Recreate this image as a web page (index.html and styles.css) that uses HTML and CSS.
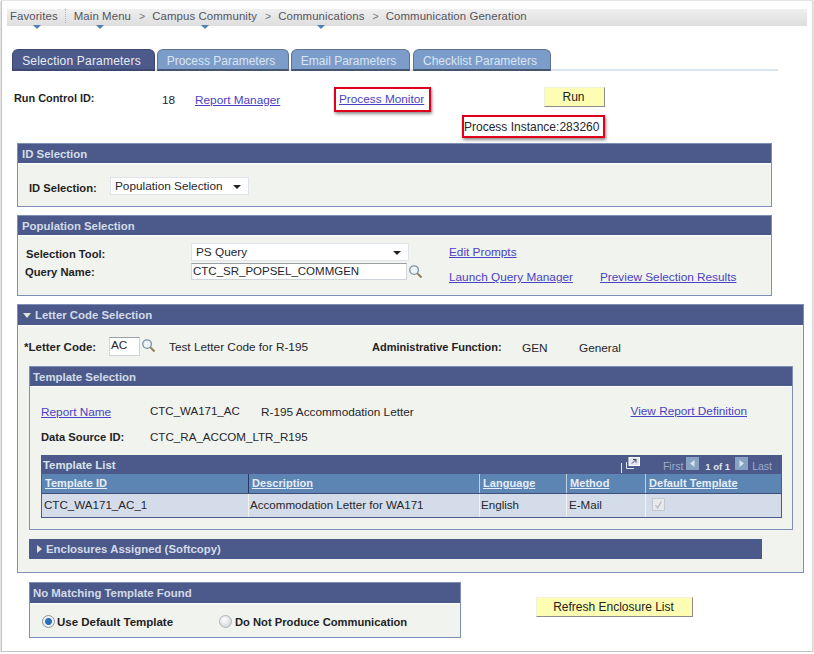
FILE: index.html
```html
<!DOCTYPE html>
<html lang="en">
<head>
<meta charset="utf-8">
<title>Communication Generation</title>
<link rel="stylesheet" href="styles.css">
</head>
<body>
<div class="frame">
  <nav class="crumbs">
    <span class="crumb fav">Favorites<i class="caret"></i></span>
    <span class="crumb menu">Main Menu<i class="caret"></i></span>
    <span class="sep">&gt;</span>
    <span class="crumb">Campus Community<i class="caret"></i></span>
    <span class="sep">&gt;</span>
    <span class="crumb">Communications<i class="caret"></i></span>
    <span class="sep">&gt;</span>
    <span class="crumb">Communication Generation</span>
  </nav>

  <div class="tabs">
    <span class="tab active t1">Selection Parameters</span>
    <span class="tab t2">Process Parameters</span>
    <span class="tab t3">Email Parameters</span>
    <span class="tab t4">Checklist Parameters</span>
  </div>

  <div class="run-row">
    <b class="lbl rc-label">Run Control ID:</b>
    <span class="rc-val">18</span>
    <a class="link rc-link" href="#">Report Manager</a>
    <span class="callout pm"><a class="link" href="#">Process Monitor</a></span>
    <button class="btn run">Run</button>
  </div>
  <div class="instance-row"><span class="callout pi">Process Instance:283260</span></div>

  <section class="panel id-panel">
    <h2 class="bar">ID Selection</h2>
    <div class="id-body">
      <b class="lbl">ID Selection:</b>
      <span class="select sel-id">Population Selection<i class="drop"></i></span>
    </div>
  </section>

  <section class="panel pop-panel">
    <h2 class="bar">Population Selection</h2>
    <div class="pop-body">
      <div class="pop-row1">
        <b class="lbl l-tool">Selection Tool:</b>
        <span class="select sel-tool">PS Query<i class="drop"></i></span>
        <a class="link ep" href="#">Edit Prompts</a>
      </div>
      <div class="pop-row2">
        <b class="lbl l-query">Query Name:</b>
        <span class="input in-query">CTC_SR_POPSEL_COMMGEN</span>
        <svg class="lens" viewBox="0 0 16 16"><circle cx="6.5" cy="6.5" r="4.6" fill="#eef4f8" stroke="#7b93a6" stroke-width="1.4"/><path d="M10 10l4.4 4.4" stroke="#8a7d4e" stroke-width="2"/></svg>
        <a class="link lq" href="#">Launch Query Manager</a>
        <a class="link pv" href="#">Preview Selection Results</a>
      </div>
    </div>
  </section>

  <section class="panel letter-panel">
    <h2 class="bar bar-lc"><i class="tri-down"></i>Letter Code Selection</h2>
    <div class="lc-row">
      <b class="lbl l-code">*Letter Code:</b>
      <span class="input in-ac">AC</span>
      <svg class="lens" viewBox="0 0 16 16"><circle cx="6.5" cy="6.5" r="4.6" fill="#eef4f8" stroke="#7b93a6" stroke-width="1.4"/><path d="M10 10l4.4 4.4" stroke="#8a7d4e" stroke-width="2"/></svg>
      <span class="lc-desc">Test Letter Code for R-195</span>
      <b class="lbl l-admin">Administrative Function:</b>
      <span class="gen">GEN</span>
      <span class="genname">General</span>
    </div>

    <section class="panel tpl-panel">
      <h2 class="bar bar-tpl">Template Selection</h2>
      <div class="tpl-row r1">
        <a class="link tl" href="#">Report Name</a>
        <span class="tv">CTC_WA171_AC</span>
        <span class="tn">R-195 Accommodation Letter</span>
        <a class="link vr" href="#">View Report Definition</a>
      </div>
      <div class="tpl-row r2">
        <b class="lbl tl">Data Source ID:</b>
        <span class="tv">CTC_RA_ACCOM_LTR_R195</span>
      </div>

      <div class="grid">
        <div class="grid-title">
          <b>Template List</b>
          <span class="pager">
            <span class="pipe"></span>
            <svg class="popout" viewBox="0 0 14 12"><rect x="3" y="0.5" width="10.5" height="8" fill="#dfe6f0" stroke="#fff"/><path d="M6 6.5l4-4M7 2.5h3v3" stroke="#39456e" fill="none"/><path d="M0.5 5v6.5H8" stroke="#dfe6f0" fill="none"/></svg>
            <span class="pg first">First</span>
            <svg class="arrow" viewBox="0 0 13 13"><rect width="13" height="13" fill="#86a3c4"/><path d="M8.5 3v7L4 6.5z" fill="#d9e4ef"/></svg>
            <b class="of">1 of 1</b>
            <svg class="arrow" viewBox="0 0 13 13"><rect width="13" height="13" fill="#86a3c4"/><path d="M4.5 3v7L9 6.5z" fill="#d9e4ef"/></svg>
            <span class="pg last">Last</span>
          </span>
        </div>
        <div class="cols head">
          <a class="hc" href="#">Template ID</a>
          <a class="hc" href="#">Description</a>
          <a class="hc" href="#">Language</a>
          <a class="hc" href="#">Method</a>
          <a class="hc" href="#">Default Template</a>
        </div>
        <div class="cols row">
          <span class="dc">CTC_WA171_AC_1</span>
          <span class="dc dc-tight">Accommodation Letter for WA171</span>
          <span class="dc dc-tight">English</span>
          <span class="dc">E-Mail</span>
          <span class="dc"><svg class="check" viewBox="0 0 13 13"><rect x="0.5" y="0.5" width="12" height="12" fill="#e6e8ec" stroke="#c4c8cf"/><path d="M3.5 7l2.2 3 3.6-6.5" stroke="#b4b8be" stroke-width="1.2" fill="none"/></svg></span>
        </div>
      </div>
    </section>

    <h2 class="bar bar-enc"><i class="tri-right"></i>Enclosures Assigned (Softcopy)</h2>
  </section>

  <div class="bottom">
    <section class="panel nm-panel">
      <h2 class="bar bar-tpl">No Matching Template Found</h2>
      <div class="nm-body">
        <span class="radio on"></span><b class="lbl r-a">Use Default Template</b>
        <span class="radio"></span><b class="lbl r-b">Do Not Produce Communication</b>
      </div>
    </section>
    <button class="btn refresh">Refresh Enclosure List</button>
  </div>
</div>
</body>
</html>
```
FILE: styles.css
```css
* { box-sizing: border-box; }
html, body { margin: 0; background: #fff; }
body { font-family: "Liberation Sans", Arial, sans-serif; font-size: 11.8px; color: #26262c; }
.frame {
  width: 812px; height: 652px; margin-left: 1px; padding: 8px 5px 0 5px;
  border: 1px solid #c4c4c4; border-top-color: #e4e4e4; border-right-color: #d8d8d8;
  box-shadow: 0 1px 2px rgba(0,0,0,.35);
}
.crumbs {
  height: 17px; width: 800px; display: flex; align-items: center; padding-left: 3px;
  background: linear-gradient(#efefef, #dedede); color: #55555e; font-size: 11.4px; letter-spacing: .1px;
}
.crumb { position: relative; line-height: 14px; margin-top: -3px; }
.fav { padding-right: 7px; margin-right: 8px; border-right: 1px dotted #b5b5b5; }
.sep { margin: -3px 7px 0 8px; color: #777; font-size: 10.5px; }
.caret {
  position: absolute; left: 50%; bottom: -6px; margin-left: -4px;
  border: 4px solid transparent; border-top-color: #4d7fb8; border-bottom: 0;
}
.menu .caret { left: 46%; }
.tabs {
  display: flex; margin: 23px 0 0 5px; height: 22px; width: 766px; gap: 2px;
  background: linear-gradient(transparent 20px, #dbe5f2 20px);
}
.tab {
  height: 22px; padding: 4px 4px 0 0; text-align: center; border-radius: 6px 6px 0 0; font-size: 12px;
  background: #7c9dc9; color: #d9e5f2; border: 1px solid #5f7391; border-bottom: 2px solid #46556f;
}
.tab.active { background: #4b5a8a; color: #e8ecf5; border-color: #3c486f; letter-spacing: .2px; }
.t1 { width: 143px; }
.t2 { width: 132px; }
.t3 { width: 119px; }
.t4 { width: 138px; margin-left: 1px; }
.link { color: #4a42c4; text-decoration: underline; }
.lbl { color: #1f1f25; font-size: 11.2px; }
.run-row { display: flex; align-items: flex-start; margin: 16px 0 0 7px; height: 26px; position: relative; }
.rc-label { width: 148px; padding-top: 5px; font-size: 10.9px; }
.rc-val { width: 33px; padding-top: 6px; }
.rc-link { width: 139px; padding-top: 6px; }
.callout {
  display: block; border: 2px solid #e0001b; box-shadow: 1px 2px 3px rgba(0,0,0,.45); background: #fff;
}
.pm { width: 97px; height: 25px; padding: 3px 0 0 3px; }
.btn {
  font: 12px "Liberation Sans", Arial, sans-serif; color: #222; background: #fdfdb4; padding: 0 2px 0 0;
  border: 1px solid; border-color: #f1f1d6 #8c8c8c #8c8c8c #f1f1d6; border-radius: 0;
}
.run { width: 61px; height: 20px; margin-left: 113px; }
.instance-row { display: flex; justify-content: flex-end; width: 598px; margin-top: 2px; height: 23px; }
.pi { width: 143px; height: 23px; padding: 3px 0 0 0; font-size: 12px; }
.panel { border: 1px solid #7f90b8; background: #f1f3ee; }
.bar {
  margin: 0; height: 20px; padding: 4px 0 0 4px; font-size: 11.4px; font-weight: bold; background: #4b5a8a; color: #d4dbe8;
  border-bottom: 1px solid #fff;
}
.bar-tpl { padding-left: 3px; }
.id-panel { width: 755px; height: 64px; margin: 5px 0 0 10px; }
.id-body { display: flex; align-items: center; padding: 13px 0 0 11px; }
.id-body .lbl { width: 81px; padding-top: 3px; }
.select {
  display: block; position: relative; height: 18px; background: #fff; border: 1px solid #dfe3e8; padding: 1px 0 0 4px;
}
.drop {
  position: absolute; right: 7px; top: 7px;
  border: 4px solid transparent; border-top-color: #222; border-bottom: 0;
}
.sel-id { width: 139px; }
.pop-panel { width: 755px; height: 81px; margin: 8px 0 0 10px; }
.pop-body { padding: 7px 0 0 8px; }
.pop-row1, .pop-row2 { display: flex; align-items: flex-start; }
.l-tool { width: 165px; padding-top: 5px; }
.sel-tool { width: 218px; margin-right: 40px; }
.ep { margin-top: 2px; }
.pop-row2 { margin-top: 2px; }
.l-query { width: 165px; padding-top: 3px; margin-left: -1px; }
.input { display: block; background: #fff; border: 1px solid #cfd4da; border-top-color: #9aa0a8; }
.in-query { width: 216px; height: 17px; padding: 1px 0 0 1px; margin-left: 1px; font-size: 11.5px; }
.lens { width: 15px; height: 15px; display: block; }
.pop-row2 .lens { margin: 1px 26px 0 1px; }
.lq { width: 151px; margin-top: 7px; }
.pv { margin-top: 7px; }
.letter-panel { width: 787px; height: 269px; margin: 8px 0 0 10px; position: relative; }
.bar-lc { height: 21px; padding-left: 4px; display: flex; align-items: flex-start; }
.tri-down {
  width: 0; height: 0; margin: 4px 4px 0 1px;
  border: 4px solid transparent; border-top: 5px solid #dfe4d8; border-bottom: 0;
}
.lc-row { display: flex; align-items: flex-start; height: 40px; padding: 11px 0 0 6px; }
.l-code { width: 85px; padding-top: 4px; font-size: 11.5px; }
.in-ac { width: 31px; height: 19px; padding-left: 1px; }
.lc-row .lens { margin: 1px 13px 0 1px; }
.lc-desc { width: 203px; padding-top: 3px; }
.l-admin { width: 150px; padding-top: 4px; font-size: 11px; }
.gen { width: 57px; padding-top: 4px; }
.genname { padding-top: 4px; }
.tpl-panel { width: 764px; height: 164px; margin-left: 11px; }
.tpl-row { display: flex; margin-left: 11px; }
.r1 { padding-top: 17px; height: 33px; }
.r2 { padding-top: 10px; height: 25px; }
.tl { width: 109px; }
.tv { width: 111px; font-size: 11.5px; }
.r2 .tv { width: auto; font-size: 11.6px; }
.r2 .tl { padding-top: 1px; }
.tn { width: 369.5px; }
.r1 .tl { padding-top: 1px; }
.r1 .tv, .r1 .tn { margin-top: 1px; }
.grid { width: 741px; margin: 10px 0 0 11px; border: 1px solid #4b5a8a; border-top: 0; }
.grid-title {
  height: 19px; margin: 0 -1px; background: #4b5a8a; color: #dce2ec; padding: 4px 0 0 2px; font-size: 11.4px;
  display: flex; justify-content: space-between; position: relative;
}
.pager { display: flex; align-items: flex-start; color: #9eacc8; font-size: 10.5px; margin: -4px 10px 0 0; padding-top: 2px; }
.pipe { width: 1px; height: 10px; background: #dfe6f0; margin: 6px 4px 0 0; }
.popout { width: 14px; height: 12px; margin-right: 23px; }
.first { margin-right: 3px; }
.pg { margin-top: 3px; }
.last { margin-left: 4px; }
.arrow { width: 13px; height: 13px; }
.of { color: #dfe6f0; font-size: 9.5px; margin: 4px 5px 0 6px; }
.cols { display: grid; grid-template-columns: 207px 231px 87px 79px 1fr; }
.head { height: 20px; background: #5c85b4; border-bottom: 1px solid #3f4d78; }
.hc { color: #e6eef7; font-weight: bold; font-size: 11px; letter-spacing: .05px; padding: 3px 0 0 3px; border-right: 1px solid #c2cfe0; height: 19px; }
.head .hc:nth-child(1) { border-right-color: #28385e; }
.hc:last-child { border-right: 0; }
.row { height: 23px; background: #d5dce9; }
.dc { padding: 4px 0 0 2px; border-right: 1px solid #f1f3ee; font-size: 11.6px; }
.dc-tight { padding-left: 1px; }
.dc:last-child { border-right: 0; padding: 4px 0 0 6px; }
.check { width: 13px; height: 13px; display: block; }
.bar-enc {
  width: 733px; height: 20px; margin: 9px 0 0 11px; padding: 4px 0 0 8px; display: flex; align-items: flex-start; border-bottom: 0;
}
.tri-right {
  width: 0; height: 0; margin: 2px 4px 0 0;
  border: 4px solid transparent; border-left: 5px solid #e3dfcf; border-right: 0;
}
.bottom { display: flex; align-items: flex-start; margin: 9px 0 0 22px; }
.nm-panel { width: 432px; height: 56px; }
.nm-panel .bar { height: 21px; }
.nm-body { display: flex; align-items: center; padding: 11px 0 0 12px; }
.radio {
  width: 13px; height: 13px; border-radius: 50%; margin-right: 3px;
  background: radial-gradient(circle at 40% 35%, #fff, #cfd2d6 85%); border: 1px solid #b0b4ba;
}
.radio.on { background: radial-gradient(circle, #2a6fb8 0 3px, #eef1f4 4px); border-color: #8e949c; margin-right: 2px; }
.r-a { width: 162px; font-size: 11.5px; }
.refresh { width: 157px; height: 20px; margin: 15px 0 0 75px; }
```
